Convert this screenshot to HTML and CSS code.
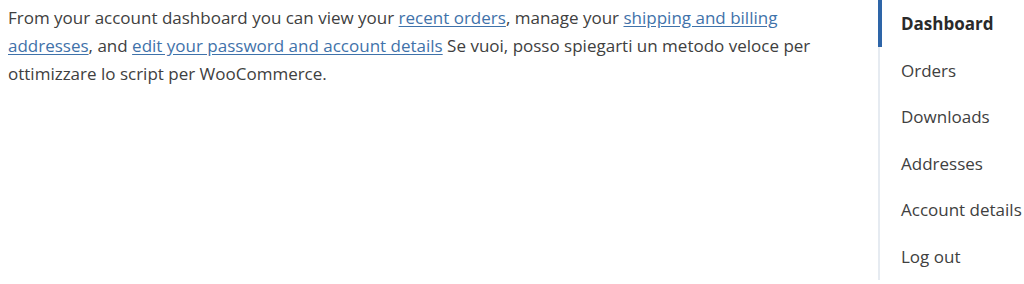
FILE: index.html
```html
<!DOCTYPE html>
<html>
<head>
<meta charset="utf-8">
<link rel="stylesheet" href="styles.css">
</head>
<body>
<div class="layout">
  <div class="content">
    <p>From your account dashboard you can view your <a href="#">recent orders</a>, manage your <a href="#">shipping and billing addresses</a>, and <a href="#">edit your password and account details</a> Se vuoi, posso spiegarti un metodo veloce per ottimizzare lo script per WooCommerce.</p>
  </div>
  <nav class="nav">
    <a class="item active" href="#">Dashboard</a>
    <a class="item" href="#">Orders</a>
    <a class="item" href="#">Downloads</a>
    <a class="item" href="#">Addresses</a>
    <a class="item" href="#">Account details</a>
    <a class="item" href="#">Log out</a>
  </nav>
</div>
</body>
</html>
```
FILE: styles.css
```css
html, body {
  margin: 0;
  padding: 0;
  background: #fff;
}
body {
  font-family: "Open Sans", "Noto Sans", sans-serif;
  color: #404040;
  font-size: 17px;
}
.layout {
  display: flex;
  align-items: flex-start;
}
.content {
  width: 870px;
  padding-left: 8px;
  box-sizing: border-box;
}
.content p {
  margin: 4px 0 0;
  line-height: 28px;
  width: 815px;
}
.content a {
  color: #3f72aa;
  text-decoration: underline;
  text-underline-offset: 2px;
}
.nav {
  margin-left: 8px;
  display: flex;
  flex-direction: column;
  border-left: 2px solid #e6ebf1;
  height: 280px;
}
.item {
  display: block;
  height: 46.6px;
  line-height: 48px;
  padding-left: 19px;
  color: #404040;
  text-decoration: none;
  white-space: nowrap;
  margin-left: -2px;
  border-left: 4px solid transparent;
}
.item.active {
  border-left-color: #2e65a8;
  font-weight: 700;
  color: #2a2a2a;
}
```
